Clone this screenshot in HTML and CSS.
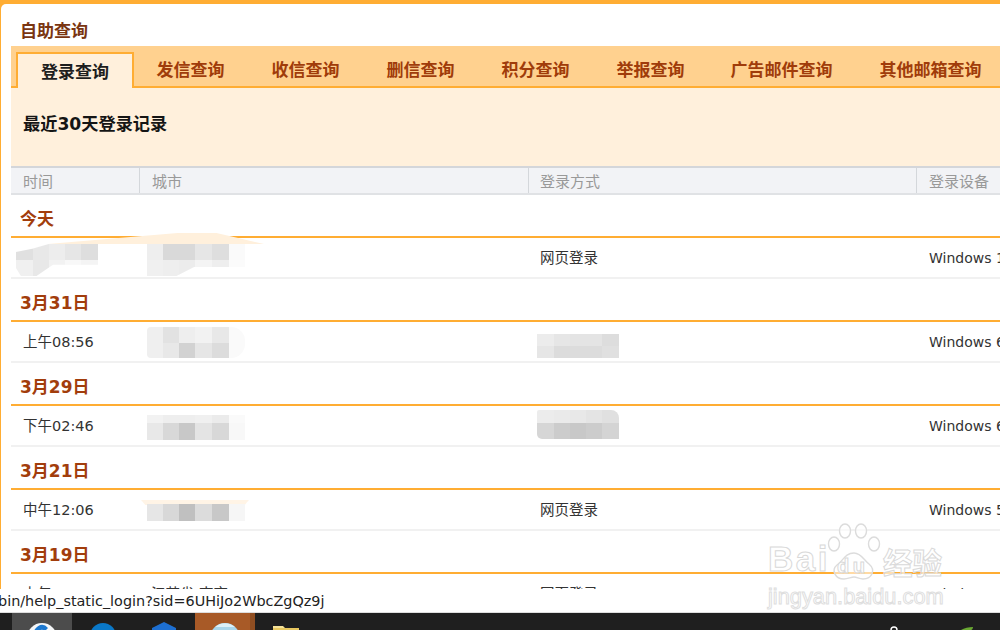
FILE: index.html
```html
<!DOCTYPE html>
<html lang="zh-CN">
<head>
<meta charset="utf-8">
<title>自助查询</title>
<link rel="stylesheet" href="styles.css">
</head>
<body>
<div class="screen">
  <main class="card">
    <h1 class="title">自助查询</h1>
    <nav class="tabs">
      <a class="tab active">登录查询</a>
      <a class="tab t2">发信查询</a>
      <a class="tab t2">收信查询</a>
      <a class="tab t2">删信查询</a>
      <a class="tab t2">积分查询</a>
      <a class="tab t2">举报查询</a>
      <a class="tab t3">广告邮件查询</a>
      <a class="tab t3">其他邮箱查询</a>
    </nav>
    <div class="intro">最近30天登录记录</div>
    <div class="row head">
      <div class="c1">时间</div><div class="c2">城市</div><div class="c3">登录方式</div><div class="c4">登录设备</div>
    </div>
    <div class="day">今天</div>
    <div class="row rec">
      <div class="c1"><span class="smear s1"></span><span class="blur b1"></span></div><div class="c2"><span class="blur b2"></span></div><div class="c3">网页登录</div><div class="c4">Windows 10</div>
    </div>
    <div class="day">3月31日</div>
    <div class="row rec">
      <div class="c1">上午08:56</div><div class="c2"><span class="blur b3"></span></div><div class="c3"><span class="blur b4"></span></div><div class="c4">Windows 6</div>
    </div>
    <div class="day">3月29日</div>
    <div class="row rec">
      <div class="c1">下午02:46</div><div class="c2"><span class="blur b5"></span></div><div class="c3"><span class="blur b6"></span></div><div class="c4">Windows 6</div>
    </div>
    <div class="day">3月21日</div>
    <div class="row rec">
      <div class="c1">中午12:06</div><div class="c2"><span class="smear s2"></span><span class="blur b7"></span></div><div class="c3">网页登录</div><div class="c4">Windows 5</div>
    </div>
    <div class="day">3月19日</div>
    <div class="row rec">
      <div class="c1">上午10:22</div><div class="c2">江苏省 南京</div><div class="c3">网页登录</div><div class="c4">Windows 5</div>
    </div>
  </main>
  <div class="status">bin/help_static_login?sid=6UHiJo2WbcZgQz9j</div>
  <footer class="taskbar">
    <span class="slot current"><svg class="ico" viewBox="0 0 30 17"><circle cx="15" cy="25" r="15" fill="#f4f6f8"/><path d="M6 25a9 12 0 0 1 15-10l-3 3a5 5 0 0 0-7 7z" fill="#1c78d0"/></svg></span>
    <span class="slot"><svg class="ico" viewBox="0 0 30 17"><circle cx="15" cy="23" r="13" fill="#0a78c8"/><circle cx="16" cy="24" r="6" fill="#1f1f1f"/></svg></span>
    <span class="slot"><svg class="ico" viewBox="0 0 30 17"><path d="M15 9 27 15v2H3v-2z" fill="#1d6fd1"/></svg></span>
    <span class="slot open"><svg class="ico" viewBox="0 0 30 17"><circle cx="15" cy="25" r="15" fill="#a9d6ea"/><path d="M5 14a15 15 0 0 1 20 0z" fill="#dcf0f7"/></svg></span>
    <span class="slot"><svg class="ico" viewBox="0 0 30 17"><path d="M2 15h26v2H2z" fill="#e8c860"/><path d="M2 13h10l2 2H2z" fill="#f5e29a"/></svg></span>
    <span class="tray">
      <svg class="tray-a" viewBox="0 0 8 4"><circle cx="4" cy="4" r="3" fill="none" stroke="#fff" stroke-width="1.4"/></svg>
      <svg class="tray-b" viewBox="0 0 14 3"><path d="M1 3C4 1 9 0 13 0c0 1-1 3-2 3z" fill="#6aa832"/></svg>
    </span>
  </footer>
  <aside class="mark">
    <svg class="paw" viewBox="0 0 54 58">
      <g fill="rgba(255,255,255,.55)" stroke="#dcdcdc" stroke-width="1.4">
        <ellipse cx="18" cy="8" rx="5.5" ry="7"/><ellipse cx="34" cy="8" rx="5.5" ry="7"/>
        <ellipse cx="7" cy="21" rx="5.5" ry="7"/><ellipse cx="47" cy="21" rx="5.5" ry="7"/>
        <path d="M27 22c7 0 10 7 15 11 7 6 3 15-6 15-4 0-6-2-9-2s-6 2-10 2C8 48 4 39 10 34c6-4 8-12 17-12z" transform="translate(0 8)"/>
      </g>
    </svg>
    <span class="bai">Bai</span>
    <span class="du">du</span>
    <span class="jy">经验</span>
    <span class="mark-url">jingyan.baidu.com</span>
  </aside>
</div>
</body>
</html>
```

FILE: styles.css
```css
* { box-sizing: border-box; }
html, body { margin: 0; padding: 0; }
body { width: 1000px; height: 630px; overflow: hidden; font-family: "DejaVu Sans", "Noto Sans CJK SC", sans-serif; background: #fff; }
.screen { position: relative; width: 1000px; height: 630px; display: flex; flex-direction: column; overflow: hidden; background: #ffad33; padding-top: 4px; }
.card { flex: none; height: 585px; overflow: hidden; background: #fff; margin-left: 1px; padding-left: 10px; border-top-left-radius: 5px; }
.title { margin: 0; height: 42px; padding: 16px 0 0 9px; font-size: 17px; line-height: 22px; font-weight: 700; color: #7a3511; }
.tabs { width: 990px; height: 42px; display: flex; background: #ffd18f; border-bottom: 2px solid #ffad33; padding: 6px 0 0 5px; }
.tab { display: block; font-size: 17px; line-height: 37px; font-weight: 700; color: #a03c0a; text-align: center; white-space: nowrap; flex: none; }
.tab.active { width: 118px; height: 36px; margin-right: -1px; background: #fff0dc; border: 2px solid #ffad33; border-bottom: 0; color: #1e1e1e; line-height: 36px; }
.tab.t2 { width: 115px; }
.tab.t3 { width: 149px; padding-right: 2px; }
.intro { width: 990px; height: 78px; background: #fff0dc; padding: 25px 0 0 12px; font-size: 17.2px; line-height: 22px; font-weight: 700; color: #151515; }
.row { display: grid; grid-template-columns: 128px 389px 388px 1fr; width: 990px; white-space: nowrap; }
.head { height: 29px; overflow: hidden; background: #f2f3f6; border-top: 2px solid #d4d6da; border-bottom: 2px solid #e0e2e5; font-size: 15px; line-height: 29px; color: #999; }
.head > div { padding-left: 12px; border-left: 1px solid #d4d7db; }
.head > .c1 { border-left: 0; }
.head > .c3 { padding-left: 11px; }
.day { width: 990px; height: 43px; border-bottom: 2px solid #ffad33; padding: 12px 0 0 9px; font-size: 17px; line-height: 24px; font-weight: 700; color: #a23d0c; }
.rec { height: 41px; border-bottom: 2px solid #f1f1f1; font-size: 14.5px; line-height: 40px; color: #333; }
.rec > div { padding-left: 12px; position: relative; }
.rec > .c4 { padding-left: 13px; font-size: 14px; }
.blur { position: absolute; display: block; filter: blur(0.5px); background-repeat: no-repeat; }
.smear { position: absolute; display: block; background: #fff0dc; }
.s1 { left: 37px; top: -5px; width: 216px; height: 11px; clip-path: polygon(0 100%, 45% 25%, 60% 0, 78% 0, 88% 45%, 100% 100%); }
.s2 { left: 2px; top: 10px; width: 108px; height: 5px; clip-path: polygon(0 0, 100% 0, 96% 100%, 4% 100%); opacity: .7; }
.b1 { left: 5px; top: 6px; width: 82px; height: 32px; clip-path: polygon(0 25%, 20% 15%, 40% 0, 100% 0, 100% 65%, 45% 65%, 25% 100%, 6% 100%, 0 75%);
  background: linear-gradient(90deg, #e0e0e0 0 17px, #e8e8e8 17px 33px, #ededed 33px 49px, #e6e6e6 49px 65px, #dedede 65px) 0 0 / 100% 16px no-repeat,
              linear-gradient(90deg, #f0f0f0 0 17px, #e8e8e8 17px 33px, #f2f2f2 33px 49px, #f8f8f8 49px 65px, #f4f4f4 65px) 0 16px / 100% 16px no-repeat; }
.b2 { left: 8px; top: 6px; width: 98px; height: 32px; clip-path: polygon(0 0, 100% 0, 100% 72%, 48% 72%, 30% 100%, 0 100%);
  background: linear-gradient(90deg, #eee 0 16px, #d9d9d9 16px 48px, #e6e6e6 48px 65px, #dedede 65px 82px, #fafafa 82px) 0 0 / 100% 16px no-repeat,
              linear-gradient(90deg, #f0f0f0 0 16px, #eee 16px 32px, #ececec 32px 48px, #f4f4f4 48px 65px, #eee 65px 82px, #fbfbfb 82px) 0 16px / 100% 16px no-repeat; }
.b3 { left: 8px; top: 5px; width: 98px; height: 31px; border-radius: 4px 14px 14px 4px;
  background: linear-gradient(90deg, #efefef 0 16px, #e2e2e2 16px 32px, #eee 32px 48px, #f2f2f2 48px 65px, #e8e8e8 65px 82px, #fafafa 82px) 0 0 / 100% 16px no-repeat,
              linear-gradient(90deg, #efefef 0 16px, #e8e8e8 16px 32px, #d2d2d2 32px 48px, #e6e6e6 48px 65px, #dcdcdc 65px 82px, #fafafa 82px) 0 16px / 100% 15px no-repeat; }
.b4 { left: 9px; top: 12px; width: 82px; height: 24px;
  background: linear-gradient(90deg, #ececec 0 17px, #e6e6e6 17px 33px, #e4e4e4 33px 65px, #ddd 65px) 0 0 / 100% 12px no-repeat,
              linear-gradient(90deg, #e6e6e6 0 17px, #dcdcdc 17px 65px, #e0e0e0 65px) 0 12px / 100% 12px no-repeat; }
.b5 { left: 8px; top: 9px; width: 98px; height: 25px;
  background: linear-gradient(90deg, #f2f2f2 0 16px, #eee 16px 48px, #f0f0f0 48px 65px, #ebebeb 65px 82px, #fafafa 82px) 0 0 / 100% 8px no-repeat,
              linear-gradient(90deg, #e8e8e8 0 16px, #d8d8d8 16px 32px, #c8c8c8 32px 48px, #e4e4e4 48px 65px, #d8d8d8 65px 82px, #f8f8f8 82px) 0 8px / 100% 17px no-repeat; }
.b6 { left: 9px; top: 4px; width: 82px; height: 29px; border-radius: 2px 8px 0 5px;
  background: linear-gradient(90deg, #ececec 0 17px, #eaeaea 17px 33px, #e8e8e8 33px 49px, #e4e4e4 49px 65px, #e0e0e0 65px) 0 0 / 100% 13px no-repeat,
              linear-gradient(90deg, #d6d6d6 0 17px, #ccc 17px 33px, #c8c8c8 33px 49px, #ccc 49px 65px, #d4d4d4 65px) 0 13px / 100% 16px no-repeat; }
.b7 { left: 8px; top: 14px; width: 98px; height: 17px; background: linear-gradient(90deg, #e6e6e6 0 16px, #d8d8d8 16px 32px, #c0c0c0 32px 48px, #dcdcdc 48px 65px, #c8c8c8 65px 82px, #f6f6f6 82px); }
.status { flex: none; height: 24px; background: #fff; margin-left: -2px; font-size: 14.4px; line-height: 24px; color: #222; border-bottom: 1px solid #ddd; white-space: nowrap; }
.taskbar { flex: none; height: 17px; background: #1f1f1f; display: flex; padding-left: 12px; overflow: hidden; }
.slot { flex: none; width: 61px; height: 17px; display: flex; justify-content: center; }
.slot.current { background: #4c4c4c; width: 60px; }
.slot.open { background: #a85a27; width: 60px; margin-left: 1px; box-shadow: inset -5px 0 0 #8f4e22; }
.ico { width: 30px; height: 17px; display: block; }
.tray { flex: 1; position: relative; }
.tray-a { position: absolute; left: 574px; top: 13px; width: 8px; height: 4px; }
.tray-b { position: absolute; left: 644px; top: 14px; width: 14px; height: 3px; }
.mark { position: absolute; left: 768px; top: 523px; width: 180px; height: 88px; color: rgba(255,255,255,0.65); -webkit-text-stroke: 1px #d9d9d9; pointer-events: none; font-family: "Liberation Sans", sans-serif; }
.mark span { position: absolute; white-space: nowrap; }
.paw { position: absolute; left: 59px; top: 0; width: 54px; height: 58px; }
.bai { left: 0; top: 16px; font-size: 35px; line-height: 40px; letter-spacing: 2.5px; font-weight: 700; }
.du { left: 69px; top: 31px; font-size: 20px; line-height: 24px; letter-spacing: 3.5px; font-weight: 700; }
.jy { left: 115px; top: 17px; font-size: 29.5px; line-height: 42px; font-weight: 700; font-family: "Noto Sans CJK SC", sans-serif; }
.mark-url { left: 0; top: 61px; font-size: 21.8px; line-height: 26px; -webkit-text-stroke: 1px #dedede; }
```
